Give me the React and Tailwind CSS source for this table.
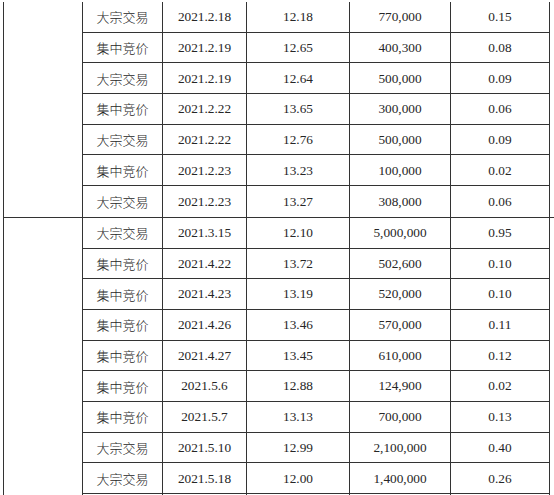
import React from "react";

const g1 = [
  ["大宗交易", "2021.2.18", "12.18", "770,000", "0.15"],
  ["集中竞价", "2021.2.19", "12.65", "400,300", "0.08"],
  ["大宗交易", "2021.2.19", "12.64", "500,000", "0.09"],
  ["集中竞价", "2021.2.22", "13.65", "300,000", "0.06"],
  ["大宗交易", "2021.2.22", "12.76", "500,000", "0.09"],
  ["集中竞价", "2021.2.23", "13.23", "100,000", "0.02"],
  ["大宗交易", "2021.2.23", "13.27", "308,000", "0.06"],
];
const g2 = [
  ["大宗交易", "2021.3.15", "12.10", "5,000,000", "0.95"],
  ["集中竞价", "2021.4.22", "13.72", "502,600", "0.10"],
  ["集中竞价", "2021.4.23", "13.19", "520,000", "0.10"],
  ["集中竞价", "2021.4.26", "13.46", "570,000", "0.11"],
  ["集中竞价", "2021.4.27", "13.45", "610,000", "0.12"],
  ["集中竞价", "2021.5.6", "12.88", "124,900", "0.02"],
  ["集中竞价", "2021.5.7", "13.13", "700,000", "0.13"],
  ["大宗交易", "2021.5.10", "12.99", "2,100,000", "0.40"],
  ["大宗交易", "2021.5.18", "12.00", "1,400,000", "0.26"],
  ["", "", "", "", ""],
];

function Row({ r, last }) {
  return (
    <div className={"flex h-[30.7px] " + (last ? "" : "border-b border-[#333333]")}>
      <div className="w-[80px] shrink-0 border-l border-[#333333] flex items-center justify-center text-[13px] font-['Noto_Sans_CJK_SC',sans-serif] font-light">
        {r[0]}
      </div>
      <div className="w-[84px] shrink-0 border-l border-[#333333] flex items-center justify-center">{r[1]}</div>
      <div className="w-[103px] shrink-0 border-l border-[#333333] flex items-center justify-center">{r[2]}</div>
      <div className="w-[101px] shrink-0 border-l border-[#333333] flex items-center justify-center">{r[3]}</div>
      <div className="w-[100px] shrink-0 border-l border-r border-[#333333] flex items-center justify-center">{r[4]}</div>
    </div>
  );
}

function Group({ rows, bottom }) {
  return (
    <div className={"flex " + (bottom ? "border-b border-[#333333]" : "")}>
      <div className="w-[79px] shrink-0 border-l border-[#333333]" />
      <div className="flex flex-col">
        {rows.map((r, i) => (
          <Row key={i} r={r} last={i === rows.length - 1} />
        ))}
      </div>
    </div>
  );
}

export default function App() {
  return (
    <div className="w-[554px] h-[495px] overflow-hidden bg-white text-[#262626] text-[13.3px] font-['Liberation_Serif','Noto_Sans_CJK_SC',serif] leading-none">
      <div className="pl-[3px] pt-[2px]">
        <Group rows={g1} bottom />
        <Group rows={g2} />
      </div>
    </div>
  );
}
